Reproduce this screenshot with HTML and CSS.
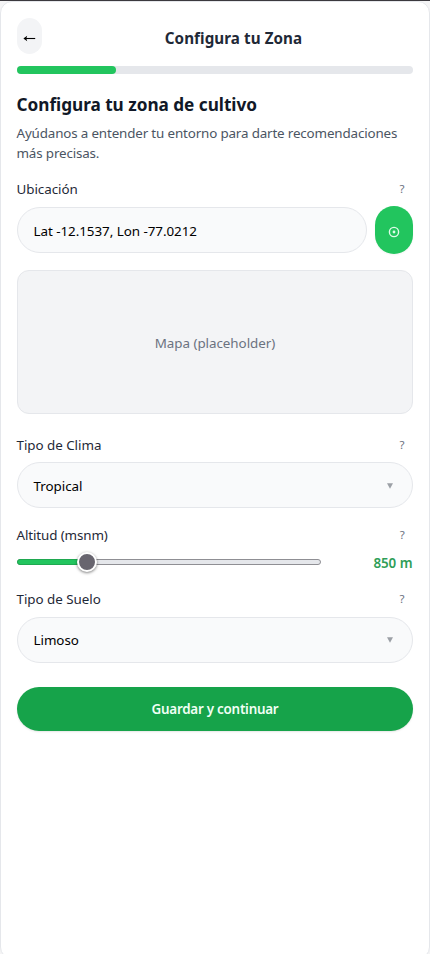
FILE: index.html
```html
<!DOCTYPE html>
<html lang="es">
<head>
<meta charset="utf-8">
<meta name="viewport" content="width=device-width, initial-scale=1">
<title>Configura tu Zona</title>
<link rel="stylesheet" href="styles.css">
</head>
<body>
<main class="screen">
  <header class="header">
    <button class="back" aria-label="Volver">
      <svg width="13" height="9" viewBox="0 0 13 9"><path d="M1 4.5H12.2" stroke="#000" stroke-width="1.1"/><path d="M.4 4.5L4.2 1.8L3.3 4.5L4.2 7.2Z" fill="#000"/></svg>
    </button>
    <div class="title">Configura tu Zona</div>
  </header>
  <div class="progress"><div class="progress-fill"></div></div>
  <h1 class="heading">Configura tu zona de cultivo</h1>
  <p class="intro">Ayúdanos a entender tu entorno para darte recomendaciones<br>más precisas.</p>

  <div class="label"><span>Ubicación</span><span class="help">?</span></div>
  <div class="location">
    <div class="field"><span>Lat -12.1537, Lon -77.0212</span></div>
    <button class="locate" aria-label="Usar mi ubicación">
      <svg width="12" height="12" viewBox="0 0 12 12"><circle cx="6" cy="6" r="4.6" fill="none" stroke="#dffbe8" stroke-width="1.4"/><circle cx="6" cy="6" r="1.4" fill="#dffbe8"/></svg>
    </button>
  </div>
  <div class="map">Mapa (placeholder)</div>

  <div class="label"><span>Tipo de Clima</span><span class="help">?</span></div>
  <div class="field select"><span>Tropical</span><svg width="6" height="6" viewBox="0 0 6 6"><path d="M0 .3H6L3 5.7Z" fill="#9ca0a6"/></svg></div>

  <div class="label label-alt"><span>Altitud (msnm)</span><span class="help">?</span></div>
  <div class="range">
    <div class="track"><div class="track-fill"></div><div class="thumb"></div></div>
    <span class="value">850 m</span>
  </div>

  <div class="label label-soil"><span>Tipo de Suelo</span><span class="help">?</span></div>
  <div class="field select select-soil"><span>Limoso</span><svg width="6" height="6" viewBox="0 0 6 6"><path d="M0 .3H6L3 5.7Z" fill="#9ca0a6"/></svg></div>
  <button class="save">Guardar y continuar</button>
</main>
</body>
</html>
```
FILE: styles.css
```css
* { box-sizing: border-box; }
body {
  margin: 0;
  height: 954px;
  overflow: hidden;
  border-top: 1px solid #3b393e;
  background: #f4f4f5;
  font-family: "Noto Sans", "Open Sans", sans-serif;
  font-size: 13.4px;
  line-height: 20px;
  letter-spacing: -0.04px;
  color: #1f2937;
}
button { border: 0; padding: 0; font: inherit; }
svg { display: block; flex: none; }
span { white-space: nowrap; }
.screen {
  height: 958px;
  padding: 16px 16px 0;
  background: #fff;
  border: 1px solid #e5e7eb;
  border-radius: 12px;
}
.header { display: flex; height: 36px; align-items: center; }
.back {
  width: 25px;
  height: 36px;
  border-radius: 12.5px;
  background: #f3f4f6;
  display: flex;
  align-items: center;
  justify-content: center;
  padding: 5px 1px 0 0;
}
.title {
  flex: 1;
  padding: 3px 0 0 12px;
  text-align: center;
  font-size: 15.2px;
  font-weight: 700;
  letter-spacing: 0.07px;
}
.progress { height: 8px; margin-top: 12px; border-radius: 4px; background: #e5e7eb; }
.progress-fill { width: 25%; height: 8px; border-radius: 4px; background: #22c55e; }
.heading {
  margin: 17px 0 0 -0.5px;
  font-size: 17.2px;
  line-height: 28px;
  font-weight: 700;
  letter-spacing: -0.02px;
  color: #111827;
}
.intro { margin: 4px 0 0 -0.5px; color: #4b5563; letter-spacing: -0.155px; white-space: nowrap; }
.label {
  height: 20px;
  margin: 16px 0 0 -0.5px;
  padding-right: 8.5px;
  display: flex;
  justify-content: space-between;
  align-items: center;
}
.help { font-size: 11.5px; color: #6b7280; }
.location { display: flex; gap: 8px; align-items: center; height: 48px; margin-top: 7px; }
.field {
  flex: 1;
  height: 46px;
  padding: 1px 19px 0 15.5px;
  border: 1px solid #e5e7eb;
  border-radius: 23px;
  background: #f9fafb;
  color: #000;
  display: flex;
  align-items: center;
  justify-content: space-between;
}
.locate {
  width: 38px;
  height: 48px;
  padding-top: 4px;
  border-radius: 19px;
  background: #22c55e;
  box-shadow: 0 1px 2px #0000000d;
  display: flex;
  align-items: center;
  justify-content: center;
}
.map {
  height: 144px;
  margin: 16px 0 21px;
  padding-top: 2px;
  border: 1px solid #e5e7eb;
  border-radius: 12px;
  background: #f3f4f6;
  color: #6b7280;
  letter-spacing: -0.04px;
  display: flex;
  align-items: center;
  justify-content: center;
}
.select { margin-top: 7px; }
.select-soil { margin-top: 8px; padding-top: 0; padding-bottom: 1px; }
.label-alt { margin-top: 17px; letter-spacing: -0.12px; }
.range { display: flex; justify-content: space-between; align-items: center; height: 20px; margin-top: 7px; }
.track {
  position: relative;
  width: 304px;
  height: 6px;
  border: 1px solid #8f8f94;
  border-radius: 3px;
  background: #e5e7eb;
}
.track-fill {
  width: 70px;
  height: 6px;
  margin: -1px;
  border: 1px solid #1fa850;
  border-radius: 3px 0 0 3px;
  background: #22c55e;
}
.thumb {
  position: absolute;
  left: 59px;
  top: -8px;
  width: 20px;
  height: 20px;
  border: 2px solid #fff;
  border-radius: 50%;
  background: #68656f;
  box-shadow: 0 1px 3px #00000080;
}
.value { padding: 2px 0.5px 0 0; font-weight: 600; color: #2f9e57; }
.label-soil { margin-top: 17px; }
.save {
  display: block;
  width: 100%;
  height: 44px;
  margin-top: 24px;
  padding-bottom: 1px;
  border-radius: 22px;
  background: #16a34a;
  color: #f0fff5;
  font-weight: 600;
  letter-spacing: -0.24px;
  text-align: center;
  box-shadow: 0 1px 2px #0000001a;
}
```
